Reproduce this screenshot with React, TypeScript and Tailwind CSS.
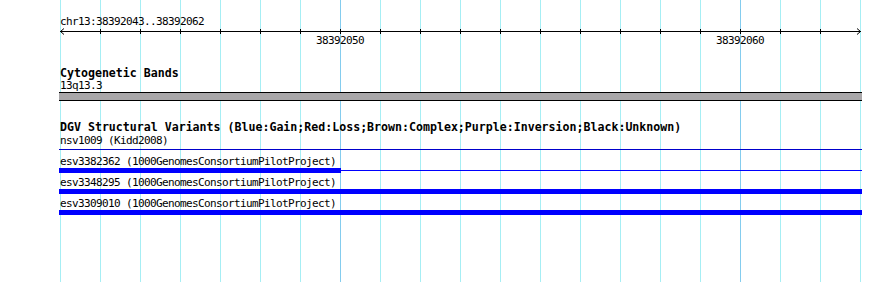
import React from "react";

// grid every 40px, darker at the labelled ticks
const gridXs = Array.from({ length: 21 }, (_, i) => 60 + i * 40);
const majorXs = [340, 740];
const tickXs = Array.from({ length: 19 }, (_, i) => 100 + i * 40);

const variants = [
  { name: "esv3382362 (1000GenomesConsortiumPilotProject)", barWidth: 282 },
  { name: "esv3348295 (1000GenomesConsortiumPilotProject)", barWidth: 803 },
  { name: "esv3309010 (1000GenomesConsortiumPilotProject)", barWidth: 803 },
];

const small = "h-[13px] text-[11px] tracking-[-0.62px] leading-[13px] whitespace-nowrap";
const bold = "text-[11.6px] leading-[13px] font-bold whitespace-nowrap";

function Grid() {
  return (
    <svg className="absolute inset-0" width={890} height={282}>
      {gridXs.map((x) => (
        <line
          key={x}
          x1={x + 0.5}
          x2={x + 0.5}
          y1={0}
          y2={282}
          stroke={majorXs.includes(x) ? "#84ccee" : "#a6eef4"}
          strokeWidth={1}
        />
      ))}
    </svg>
  );
}

function Ruler() {
  return (
    <div>
      <svg width={890} height={6} className="block overflow-visible">
        <line x1={60} x2={861} y1={3.5} y2={3.5} stroke="#000" strokeWidth={1} />
        {tickXs.map((x) => (
          <rect key={x} x={x} y={1} width={1} height={5} fill="#000" />
        ))}
        <polyline points="64,0.5 60.5,3.5 64,6.5" fill="none" stroke="#000" strokeWidth={1} />
        <polyline points="857,0.5 860.5,3.5 857,6.5" fill="none" stroke="#000" strokeWidth={1} />
      </svg>
      <div className={`relative ${small}`}>
        <span className="absolute left-[316px] top-0">38392050</span>
        <span className="absolute left-[716px] top-0">38392060</span>
      </div>
    </div>
  );
}

export default function App() {
  return (
    <div className="relative w-[890px] h-[282px] overflow-hidden bg-white text-black font-['DejaVu_Sans_Mono',monospace]">
      <Grid />
      <div className="relative flex flex-col pt-[15px]">
        <div className={`pl-[60px] ${small}`}>chr13:38392043..38392062</div>
        <Ruler />

        {/* cytogenetic bands track */}
        <div className={`mt-[20px] pl-[60px] h-[12px] ${bold}`}>Cytogenetic Bands</div>
        <div className={`pl-[60px] ${small}`}>13q13.3</div>
        <div className="ml-[59px] w-[803px] h-[9px] bg-[#a9a7a9] border-y border-black" />

        {/* DGV track */}
        <div className={`mt-[20px] pl-[60px] h-[13px] ${bold}`}>
          DGV Structural Variants (Blue:Gain;Red:Loss;Brown:Complex;Purple:Inversion;Black:Unknown)
        </div>
        <div className={`pl-[60px] ${small}`}>nsv1009 (Kidd2008)</div>
        <div className="mt-[2px] ml-[59px] w-[803px] h-px bg-[#0000cc]" />

        <div className="mt-[5px] flex flex-col gap-[3px]">
          {variants.map((v, index) => (
            <div key={index}>
              <div className={`pl-[60px] ${small}`}>{v.name}</div>
              <div className="flex items-center ml-[59px] w-[803px] h-[5px]">
                <div className="h-[5px] bg-[#0000ff]" style={{ width: v.barWidth }} />
                {v.barWidth < 803 && <div className="flex-1 h-px bg-[#0000ff]" />}
              </div>
            </div>
          ))}
        </div>
      </div>
    </div>
  );
}
